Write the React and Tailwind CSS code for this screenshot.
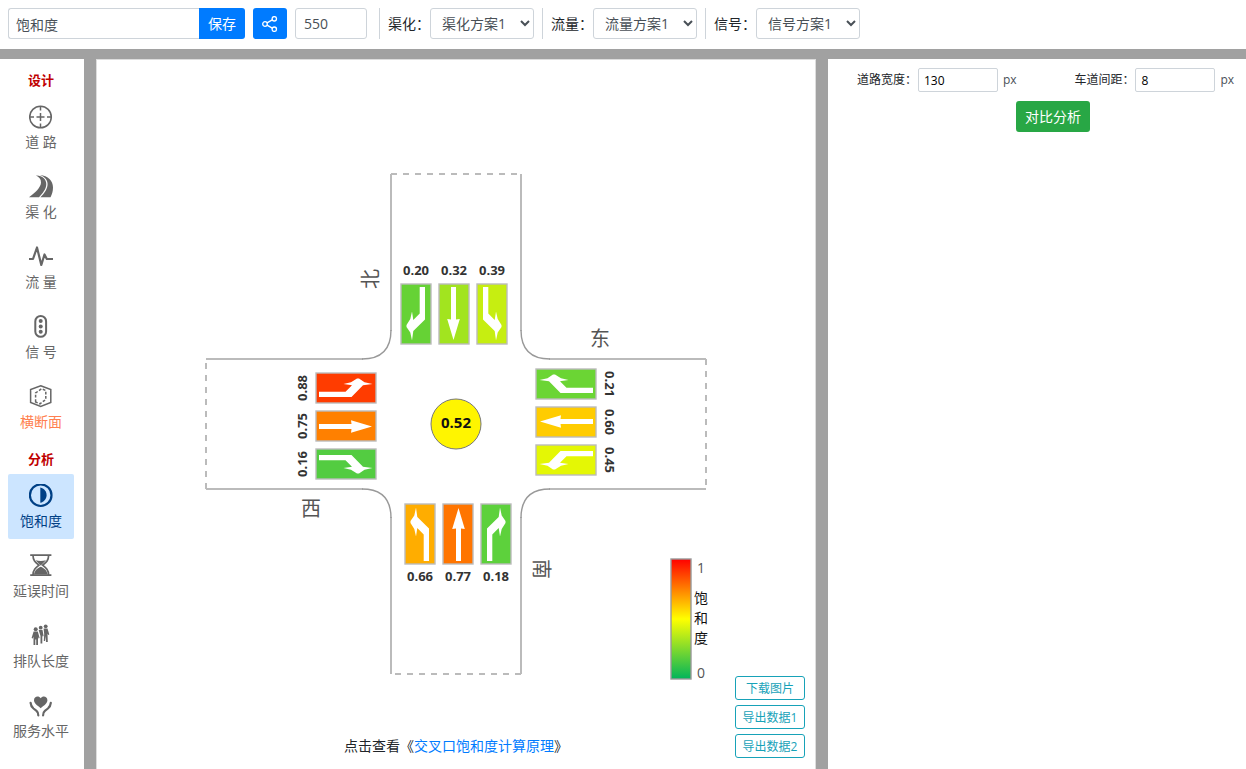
import React from "react";

const ARROWS = {
  left: "M24 57V24.500L12.300 13L11 3.500L9.300 11.500L5.500 17V19L9.300 25L11 32.500L12.300 24L18.700 30.500V57Z",
  straight: "M15.500 4L21.800 25L18 24.500V57H13V24.500L9.200 25Z",
  right: "M6 57V24.500L17.700 13L19 3.500L20.700 11.500L24.500 17V19L20.700 25L19 32.500L17.700 24L11.300 30.500V57Z",
};

const LANE_X = { left: -51, straight: -13, right: 25 };

const APPROACHES = [
  {
    id: "south",
    rotate: 0,
    lanes: [
      { turn: "left", value: "0.66", fill: "#ffad00", x: -36, y: 153, spin: 0 },
      { turn: "straight", value: "0.77", fill: "#ff7500", x: 2, y: 153, spin: 0 },
      { turn: "right", value: "0.18", fill: "#5dd13c", x: 40, y: 153, spin: 0 },
    ],
  },
  {
    id: "west",
    rotate: 90,
    lanes: [
      { turn: "left", value: "0.88", fill: "#ff3c00", x: -153, y: -36, spin: -90 },
      { turn: "straight", value: "0.75", fill: "#ff8000", x: -153, y: 2, spin: -90 },
      { turn: "right", value: "0.16", fill: "#53cc41", x: -153, y: 40, spin: -90 },
    ],
  },
  {
    id: "north",
    rotate: 180,
    lanes: [
      { turn: "left", value: "0.39", fill: "#c6ee11", x: 36, y: -153, spin: 0 },
      { turn: "straight", value: "0.32", fill: "#a2e41f", x: -2, y: -153, spin: 0 },
      { turn: "right", value: "0.20", fill: "#66d235", x: -40, y: -153, spin: 0 },
    ],
  },
  {
    id: "east",
    rotate: 270,
    lanes: [
      { turn: "left", value: "0.45", fill: "#e4f705", x: 153, y: 36, spin: 90 },
      { turn: "straight", value: "0.60", fill: "#ffcc00", x: 153, y: -2, spin: 90 },
      { turn: "right", value: "0.21", fill: "#6bd534", x: 153, y: -40, spin: 90 },
    ],
  },
];

const NAMES = [
  { text: "北", x: -85, y: -145, spin: -90 },
  { text: "东", x: 144, y: -85, spin: 0 },
  { text: "南", x: 85, y: 145, spin: 90 },
  { text: "西", x: -145, y: 85, spin: 0 },
];

function CenteredText({ x, y, spin = 0, size, children, ...rest }) {
  return (
    <text
      transform={`translate(${x} ${y}) rotate(${spin})`}
      y={Math.floor(size * 0.36)}
      textAnchor="middle"
      fontSize={size}
      {...rest}
    >
      {children}
    </text>
  );
}

function Intersection() {
  return (
    <svg viewBox="-359 -364 718 670" className="h-[670px] w-full" role="img" aria-label="交叉口饱和度">
      <defs>
        <linearGradient id="scale" x1="0" y1="0" x2="0" y2="1">
          <stop offset="0" stopColor="#ff0000" />
          <stop offset="0.5" stopColor="#ffff00" />
          <stop offset="1" stopColor="#00b45a" />
        </linearGradient>
      </defs>
      {[0, 90, 180, 270].map((angle) => (
        <g key={angle} transform={`rotate(${angle})`} fill="none">
          <path d="M-65 -250V-93M-93 -65H-250" stroke="#bbb" strokeWidth="2" />
          <path d="M-65 -94Q-65 -65 -94 -65" stroke="#999" strokeWidth="1.400" />
          <path d="M-65 -250H65" stroke="#bbb" strokeWidth="2" strokeDasharray="6 6" />
        </g>
      ))}
      {APPROACHES.map((a) => (
        <g key={a.id}>
          <g transform={`rotate(${a.rotate})`}>
            {a.lanes.map((l) => (
              <g key={l.turn} transform={`translate(${LANE_X[l.turn]} 80)`}>
                <rect width="30" height="60" fill={l.fill} />
                <rect width="30" height="60" fill="none" stroke="#bbb" strokeWidth="1.400" />
                <path d={ARROWS[l.turn]} fill="#fff" />
              </g>
            ))}
          </g>
          {a.lanes.map((l) => (
            <CenteredText key={l.turn} x={l.x} y={l.y} spin={l.spin} size={13} fontWeight="700" fill="#333">
              {l.value}
            </CenteredText>
          ))}
        </g>
      ))}
      {NAMES.map((n) => (
        <CenteredText key={n.text} x={n.x} y={n.y} spin={n.spin} size={20} fill="#555">
          {n.text}
        </CenteredText>
      ))}
      <circle r="25" fill="#fff500" stroke="#777" />
      <CenteredText x={0} y={-1} size={15} fontWeight="700" fill="#111">
        0.52
      </CenteredText>
      <rect x="215" y="135" width="20" height="120" fill="url(#scale)" stroke="#999" strokeWidth="1.400" />
      <CenteredText x={245} y={144} size={14} fill="#555">1</CenteredText>
      <CenteredText x={245} y={174} size={14} fill="#111">饱</CenteredText>
      <CenteredText x={245} y={194} size={14} fill="#111">和</CenteredText>
      <CenteredText x={245} y={214} size={14} fill="#111">度</CenteredText>
      <CenteredText x={245} y={249} size={14} fill="#555">0</CenteredText>
    </svg>
  );
}

function Icon({ children }) {
  return (
    <svg viewBox="0 0 24 24" className="size-6" aria-hidden="true">
      {children}
    </svg>
  );
}

const TargetIcon = () => (
  <Icon>
    <g fill="none" stroke="currentColor" strokeWidth="1.500">
      <circle cx="11.500" cy="12" r="10.800" />
      <path d="M11.500 1.500V5.500M11.500 18.500V22.500M1 12H5M18 12H22M11.500 8V16M7.500 12H15.500" />
    </g>
  </Icon>
);

const RoadIcon = () => (
  <Icon>
    <g fill="currentColor">
      <path d="M0 22.200C6 18 11.800 12.500 12 7.500C12 4 10 2 7 0.600C13 0.200 17.300 4.500 17.300 9C17.300 14 13.500 18.500 10 22.200Z" />
      <path d="M11 0.100C19 0.600 24 6 24 12.500C24 16.500 23 19.500 21.500 22.200H11.400C15.500 18.500 18.600 13.500 18.600 9C18.600 5 15.500 1.600 11 0.100Z" />
    </g>
  </Icon>
);

const PulseIcon = () => (
  <Icon>
    <path
      d="M0 14H4L8 2.500L12.300 20L15.500 9.500L17.800 14H24"
      fill="none"
      stroke="currentColor"
      strokeWidth="2.200"
      strokeLinejoin="round"
    />
  </Icon>
);

const SignalIcon = () => (
  <Icon>
    <rect x="6.300" y="1" width="10.800" height="20.800" rx="5.400" fill="none" stroke="currentColor" strokeWidth="2" />
    <g fill="currentColor">
      <circle cx="11.700" cy="6" r="2" />
      <circle cx="11.700" cy="11.400" r="2" />
      <circle cx="11.700" cy="16.800" r="2" />
    </g>
  </Icon>
);

const SectionIcon = () => (
  <Icon>
    <g fill="none" stroke="currentColor" strokeWidth="1.500">
      <path d="M11.700 0.800L21.800 4.600V17.400L11.700 21.400L1.600 17.400V4.600Z" />
      <path d="M6.600 17V8L12.500 3.800L16.800 5.500V14.500L11 18.800Z" strokeDasharray="2.800 1.600" />
    </g>
  </Icon>
);

const SaturationIcon = () => (
  <Icon>
    <circle cx="11.700" cy="11.200" r="10.800" fill="none" stroke="currentColor" strokeWidth="2.200" />
    <path d="M11.300 3.600C15 4.600 17.600 7.500 17.600 11.200S15 17.800 11.300 18.800Z" fill="currentColor" />
  </Icon>
);

const HourglassIcon = () => (
  <Icon>
    <g fill="none" stroke="currentColor" strokeWidth="1.700">
      <path d="M1.200 1.200H22.400M1.200 21.200H22.400" />
      <path d="M4 1.500C4 6.500 6.500 8.300 10 11.200C6.500 14 4 16 4 21M19.600 1.500C19.600 6.500 17.100 8.300 13.600 11.200C17.100 14 19.600 16 19.600 21" />
    </g>
    <path d="M6.500 6.300Q11.800 7.800 17 6.300L11.800 11.500Z" fill="currentColor" />
    <path d="M5 20.500C5.500 16.500 8.500 14 11.800 12.800C15 14 18 16.500 18.600 20.500Z" fill="currentColor" />
  </Icon>
);

const QueueIcon = () => (
  <Icon>
    <g fill="currentColor">
      <circle cx="6.700" cy="5.300" r="2" />
      <path d="M4.600 7.500H8.800L10.600 14L9.500 14.500L9 12.500V21H7.200V15.500H6.300V21H4.500V12.500L3.800 14.500L2.600 14Z" />
      <circle cx="11.700" cy="3.700" r="1.900" />
      <path d="M9.700 6H13.500L14.600 12L13.700 12.500L13.300 11V19.500H11.500V12L9.800 6.500Z" />
      <circle cx="16.700" cy="2.300" r="1.900" />
      <path d="M14.600 4.600H18.500L20.300 10.500L19.200 11L18.500 9.500L18.800 18H17L16.500 12L16 17H14.800L15.200 10Z" />
    </g>
  </Icon>
);

const ServiceIcon = () => (
  <Icon>
    <path
      d="M11.700 14.200C8 11 5 9.300 5 6.200C5 2.300 9.800 1.400 11.700 4.300C13.600 1.400 18.400 2.300 18.400 6.200C18.400 9.300 15.400 11 11.700 14.200Z"
      fill="currentColor"
    />
    <g fill="none" stroke="currentColor" strokeWidth="2.200" strokeLinecap="round">
      <path d="M1.600 8.800C1.800 11.500 2.500 12.800 4.500 14.500L7.500 16.800Q9.500 18.500 9.300 21.300" />
      <path d="M21.800 8.800C21.600 11.500 20.900 12.800 18.900 14.500L15.900 16.800Q13.900 18.500 14.100 21.300" />
    </g>
  </Icon>
);

const ShareIcon = () => (
  <svg viewBox="0 0 16 16" className="size-4" fill="none" stroke="currentColor" strokeWidth="1.300" aria-hidden="true">
    <circle cx="3" cy="8" r="2.300" />
    <circle cx="12.300" cy="2.800" r="2.200" />
    <circle cx="12.300" cy="13.200" r="2.200" />
    <path d="M5 6.900L10.300 3.900M5 9.100L10.300 12.100" />
  </svg>
);

const DESIGN = [
  { label: "道 路", icon: TargetIcon },
  { label: "渠 化", icon: RoadIcon },
  { label: "流 量", icon: PulseIcon },
  { label: "信 号", icon: SignalIcon },
  { label: "横断面", icon: SectionIcon, accent: true },
];

const ANALYSIS = [
  { label: "饱和度", icon: SaturationIcon, active: true },
  { label: "延误时间", icon: HourglassIcon },
  { label: "排队长度", icon: QueueIcon },
  { label: "服务水平", icon: ServiceIcon },
];

function NavGroup({ title, items }) {
  return (
    <section>
      <h2 className="text-center text-[13px] leading-[29px] font-bold text-[#c00000]">{title}</h2>
      <ul className="flex flex-col gap-[5px]">
        {items.map(({ label, icon: Glyph, active, accent }) => (
          <li key={label}>
            <a
              href="#"
              aria-current={active ? "page" : undefined}
              className={`flex flex-col items-center gap-0.5 rounded-xs pt-2.5 pb-2 whitespace-nowrap ${
                active ? "bg-[#cce5ff] text-[#004085]" : "text-[#666]"
              }`}
            >
              <Glyph />
              <span className={accent ? "text-[#ff7f50]" : ""}>{label}</span>
            </a>
          </li>
        ))}
      </ul>
    </section>
  );
}

function PlanSelect({ id, label, option }) {
  return (
    <div className="flex items-center border-l border-[#ced4da] pl-2">
      <label htmlFor={id} className="w-[42px] whitespace-nowrap">{label}</label>
      <select id={id} className="h-[31px] w-[104px] rounded-[3px] border border-[#ced4da] bg-white pl-[7px] text-[#495057]">
        <option>{option}</option>
      </select>
    </div>
  );
}

function PixelField({ id, label, value }) {
  return (
    <div className="flex items-center text-xs">
      <label htmlFor={id} className="w-[61px] whitespace-nowrap">{label}</label>
      <input id={id} defaultValue={value} className="h-6 w-20 rounded-xs border border-[#ced4da] px-[5px] text-black" />
      <span className="pl-[5px] text-[#495057]">px</span>
    </div>
  );
}

function ExportButton({ children }) {
  return <button className="h-6 rounded-[3px] border border-[#17a2b8] bg-white pt-px">{children}</button>;
}

export default function App() {
  return (
    <div
      lang="zh-CN"
      className="flex min-h-screen flex-col bg-[#a1a1a1] font-['Open_Sans','Noto_Sans_CJK_SC',sans-serif] text-sm leading-[21px] text-[#212529]"
    >
      <header className="flex gap-2 bg-white px-2 pt-2 pb-2.5">
        <div className="flex">
          <input
            aria-label="名称"
            defaultValue="饱和度"
            className="h-[31px] w-[191px] rounded-l-[3px] border border-r-0 border-[#ced4da] px-[7px] text-[#495057]"
          />
          <button className="h-[31px] rounded-r-[3px] bg-[#007bff] px-[9px] text-white">保存</button>
        </div>
        <button aria-label="分享" className="flex h-[31px] w-[34px] items-center justify-center rounded-[3px] bg-[#007bff] text-white">
          <ShareIcon />
        </button>
        <input
          aria-label="尺寸"
          defaultValue="550"
          className="mr-1 h-[31px] w-[72px] rounded-[3px] border border-[#ced4da] px-2 text-[#495057]"
        />
        <PlanSelect id="channel" label="渠化：" option="渠化方案1" />
        <PlanSelect id="flow" label="流量：" option="流量方案1" />
        <PlanSelect id="signal" label="信号：" option="信号方案1" />
      </header>

      <div className="mt-2.5 flex flex-1 gap-3">
        <nav className="w-[84px] bg-white pt-[7px] pr-2.5 pl-2">
          <NavGroup title="设计" items={DESIGN} />
          <div className="pt-[5px]">
            <NavGroup title="分析" items={ANALYSIS} />
          </div>
        </nav>

        <main className="relative flex min-w-0 flex-1 flex-col border border-b-0 border-[#ddd] bg-white">
          <Intersection />
          <p className="pt-[5px] text-center">
            点击查看《<a href="#" className="text-[#007bff]">交叉口饱和度计算原理</a>》
          </p>
          <div className="absolute right-2.5 bottom-[11px] flex w-[70px] flex-col gap-[5px] text-xs text-[#17a2b8]">
            <ExportButton>下载图片</ExportButton>
            <ExportButton>导出数据1</ExportButton>
            <ExportButton>导出数据2</ExportButton>
          </div>
        </main>

        <aside className="w-[418px] bg-white pt-[9px]">
          <div className="flex justify-between pr-3 pl-[29px]">
            <PixelField id="road-width" label="道路宽度：" value="130" />
            <PixelField id="lane-gap" label="车道间距：" value="8" />
          </div>
          <div className="flex justify-center pt-[9px] pl-8">
            <button className="h-[31px] rounded-[3px] bg-[#28a745] px-[9px] text-white">对比分析</button>
          </div>
        </aside>
      </div>
    </div>
  );
}
